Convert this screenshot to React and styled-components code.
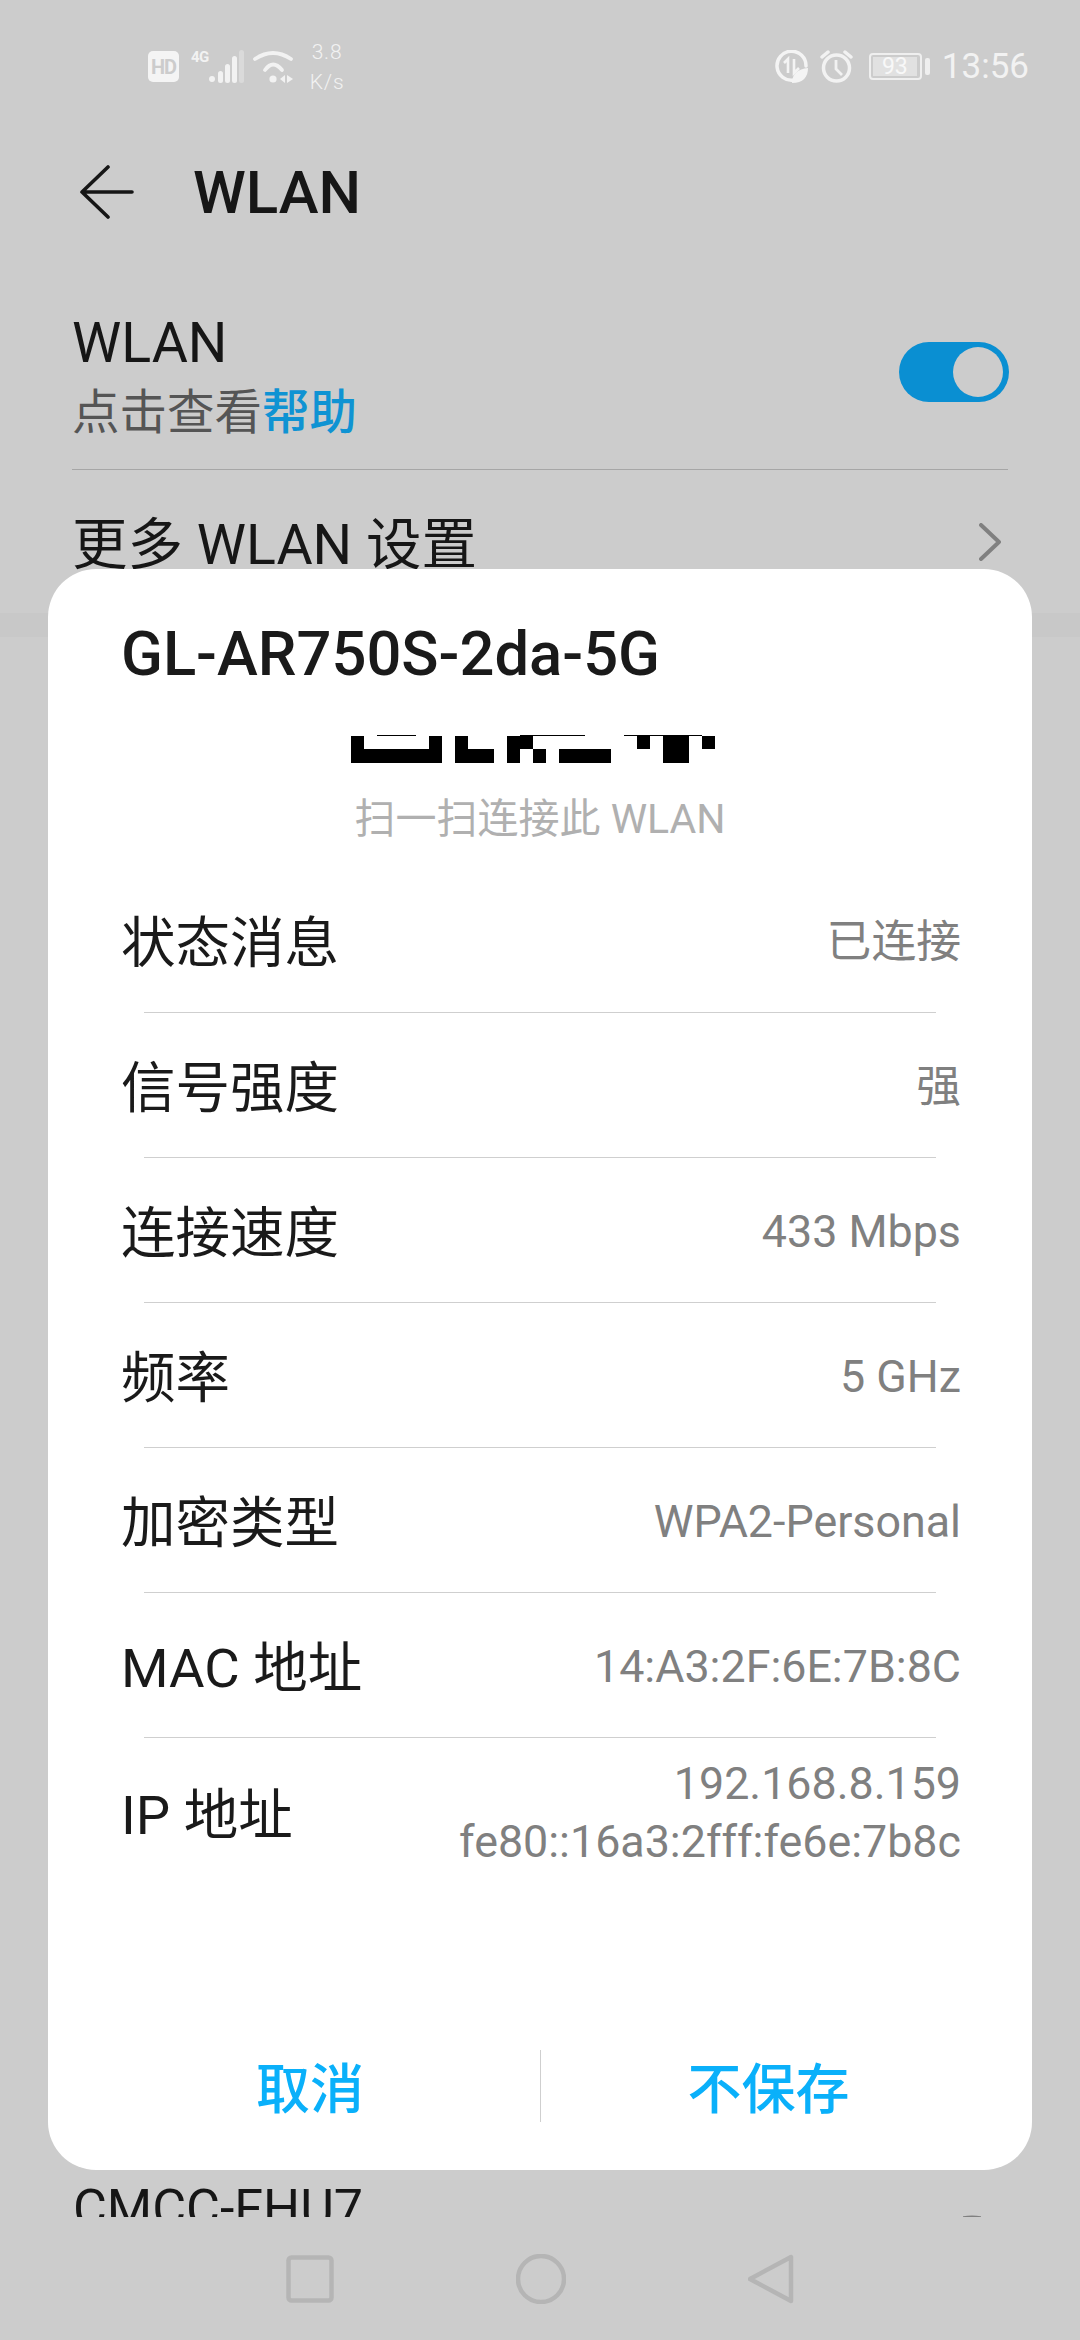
import React from 'react';
import styled, { createGlobalStyle } from 'styled-components';

const GlobalStyle = createGlobalStyle`
  html, body {
    margin: 0;
    padding: 0;
    background: #cccccc;
  }
  body {
    font-family: Roboto, "Noto Sans CJK SC", sans-serif;
  }
`;

const Page = styled.div`
  position: relative;
  width: 1080px;
  height: 2340px;
  overflow: hidden;
  background: #cccccc;
  color: #161616;
`;

const Content = styled.div`
  height: 2217px;
  overflow: hidden;
`;

const StatusBar = styled.div`
  height: 133px;
  display: flex;
  align-items: center;
  justify-content: space-between;
  padding: 0 51px 0 148px;
  box-sizing: border-box;
  color: #f2f2f2;
`;

const StatusGroup = styled.div`
  display: flex;
  align-items: center;
`;

const HdBadge = styled.div`
  width: 31px;
  height: 31px;
  border-radius: 5px;
  background: #f4f4f4;
  color: #cccccc;
  font-size: 20px;
  font-weight: 700;
  letter-spacing: -1px;
  display: flex;
  align-items: center;
  justify-content: center;
`;

const NetType = styled.div`
  width: 18px;
  margin: 0 0 20px 12px;
  font-size: 15px;
  line-height: 16px;
  font-weight: 700;
  letter-spacing: -0.5px;
  white-space: nowrap;
`;

const Speed = styled.div`
  margin-left: 14px;
  width: 36px;
  font-size: 21px;
  line-height: 30px;
  letter-spacing: 0.8px;
  text-align: center;
  font-weight: 300;
`;

const Battery = styled.div`
  width: 53px;
  height: 27px;
  margin-left: 16px;
  box-sizing: border-box;
  border: 2px solid #efefef;
  border-radius: 4px;
  padding: 2px;
`;

const BatteryLevel = styled.div`
  height: 100%;
  width: 44px;
  background: #e1e1e1;
  color: #f8f8f8;
  font-size: 23px;
  line-height: 20px;
  text-align: center;
`;

const BatteryNub = styled.div`
  width: 5px;
  height: 17px;
  margin-left: 3px;
  border-radius: 2px;
  background: #efefef;
`;

const Clock = styled.div`
  margin-left: 12px;
  font-size: 35px;
  line-height: 40px;
`;

const Header = styled.div`
  height: 117px;
  display: flex;
  align-items: center;
  padding-left: 80px;
`;

const PageTitle = styled.div`
  margin-left: 59px;
  padding-top: 3px;
  font-size: 60px;
  font-weight: 500;
  line-height: 70px;
`;

const WlanRow = styled.div`
  margin: 0 72px;
  padding: 59px 0 20px;
  display: flex;
  align-items: center;
  justify-content: space-between;
  border-bottom: 1px solid #a6a6a6;
`;

const RowTitle = styled.div`
  font-size: 55.5px;
  line-height: 69px;
  white-space: nowrap;
`;

const RowHint = styled.div`
  font-size: 47.5px;
  line-height: 71px;
  color: #555555;
`;

const HelpLink = styled.span`
  color: #0f93d3;
  font-weight: 500;
`;

const Toggle = styled.div`
  width: 110px;
  height: 60px;
  margin: 0 -1px 14px 0;
  box-sizing: border-box;
  padding: 5px 6px;
  border-radius: 30px;
  background: #0a8fd2;
  display: flex;
  justify-content: flex-end;
`;

const ToggleKnob = styled.div`
  width: 50px;
  height: 50px;
  border-radius: 50%;
  background: #cccccc;
`;

const MoreRow = styled.div`
  height: 143px;
  margin: 0 72px;
  padding-right: 7px;
  display: flex;
  align-items: center;
  justify-content: space-between;
`;

const MoreLabel = styled(RowTitle)`
  padding-top: 8px;
  font-size: 55.5px;
`;

const Band = styled.div`
  height: 24px;
  background: #c8c8c8;
`;

const ListGap = styled.div`
  height: 1537px;
`;

const NetworkRow = styled.div`
  margin: 0 72px 0 73px;
  height: 70px;
  display: flex;
  align-items: flex-end;
  justify-content: space-between;
  font-size: 52px;
  line-height: 70px;
`;

const NetworkIcon = styled.svg`
  margin: 0 27px 0 0;
  flex-shrink: 0;
  align-self: flex-start;
`;

const Modal = styled.div`
  position: absolute;
  top: 569px;
  left: 48px;
  width: 984px;
  height: 1601px;
  border-radius: 48px;
  background: #ffffff;
  display: flex;
  flex-direction: column;
  color: #1a1a1a;
`;

const ModalTitle = styled.div`
  margin: 50px 0 0 73px;
  font-size: 61.5px;
  font-weight: 500;
  line-height: 70px;
`;

const QrStrip = styled.svg`
  display: block;
  margin: 46px 0 0 303px;
`;

const QrCaption = styled.div`
  margin-top: 28px;
  font-size: 41px;
  line-height: 56px;
  text-align: center;
  color: #b0b0b0;
`;

const InfoList = styled.div`
  margin-top: 21px;
`;

const InfoRow = styled.div`
  min-height: 144px;
  box-sizing: border-box;
  padding: ${(p) => (p.$tall ? '17px' : '3px')} 71px ${(p) => (p.$tall ? '11px' : '0')} 73px;
  display: flex;
  align-items: center;
  justify-content: space-between;
`;

const InfoLabel = styled.div`
  padding-top: 3px;
  font-size: 54.5px;
  line-height: 70px;
`;

const InfoValue = styled.div`
  font-size: 44.8px;
  line-height: 58px;
  text-align: right;
  color: #808080;
`;

const InfoDivider = styled.div`
  height: 1px;
  margin: 0 96px;
  background: #cfcfcf;
`;

const ButtonBar = styled.div`
  margin-top: auto;
  padding: 0 36px 48px 32px;
  display: grid;
  grid-template-columns: 460px 1px 1fr;
  align-items: start;
`;

const ModalButton = styled.div`
  height: 72px;
  font-size: 54px;
  font-weight: 500;
  line-height: 82px;
  text-align: center;
  color: #0ab0fa;
`;

const ButtonDivider = styled.div`
  height: 72px;
  background: #cfcfcf;
`;

const NavBar = styled.div`
  height: 123px;
  display: flex;
  align-items: center;
  justify-content: center;
  gap: 182px;
  box-sizing: border-box;
`;

const SignalIcon = () => (
  <svg width="36" height="33" viewBox="0 0 36 33">
    <circle cx="3" cy="29" r="3" fill="#f2f2f2" />
    <rect x="9" y="21" width="5" height="12" rx="2.5" fill="#f2f2f2" />
    <rect x="16" y="14" width="5" height="19" rx="2.5" fill="#f2f2f2" />
    <rect x="23" y="6" width="5" height="27" rx="2.5" fill="#f2f2f2" />
    <rect x="30" y="0" width="5" height="33" rx="2.5" fill="#dadada" />
  </svg>
);

const WifiIcon = () => (
  <svg width="42" height="34" viewBox="0 0 42 34" style={{ marginLeft: 8 }}>
    <path d="M2 9 Q20 -3 38 9" fill="none" stroke="#f2f2f2" strokeWidth="3.8" strokeLinecap="round" />
    <path d="M12 20 Q20 9 29 20" fill="none" stroke="#f2f2f2" strokeWidth="3.8" strokeLinecap="round" />
    <circle cx="20" cy="29" r="3.6" fill="#f2f2f2" />
    <path d="M32 25 V33 L27 29 Z" fill="#f2f2f2" />
    <path d="M34 25 V33 L40 29 Z" fill="#f2f2f2" />
  </svg>
);

const EcoIcon = () => (
  <svg width="33" height="33" viewBox="0 0 33 33">
    <path d="M19 30 A14.5 14.5 0 1 1 31 16" fill="none" stroke="#f4f4f4" strokeWidth="3.5" strokeLinecap="round" />
    <path d="M9 13 L13 9 V23 M19 9 V23 L24 18" fill="none" stroke="#f4f4f4" strokeWidth="2.6" />
    <path d="M17 33 C17 24 23 19 33 18 C33 27 28 33 17 33 Z" fill="#f4f4f4" />
  </svg>
);

const AlarmIcon = () => (
  <svg width="33" height="33" viewBox="0 0 33 33" style={{ marginLeft: 12 }}>
    <circle cx="16.5" cy="18" r="13" fill="none" stroke="#f2f2f2" strokeWidth="3.5" />
    <path d="M16 10 V19 L22 25" fill="none" stroke="#f2f2f2" strokeWidth="2.8" />
    <path d="M2 7 L8 2 M31 7 L25 2" fill="none" stroke="#f2f2f2" strokeWidth="3.5" strokeLinecap="round" />
  </svg>
);

const BackArrow = () => (
  <svg width="54" height="54" viewBox="0 0 54 54">
    <path d="M28 2 L2 27 L28 52 M2 27 H52" fill="none" stroke="#161616" strokeWidth="3.6" strokeLinecap="round" strokeLinejoin="round" />
  </svg>
);

const Chevron = () => (
  <svg width="22" height="38" viewBox="0 0 22 38">
    <path d="M2 2 L20 19 L2 36" fill="none" stroke="#808080" strokeWidth="4" strokeLinecap="round" strokeLinejoin="round" />
  </svg>
);

const qrCells = [
  // thin edge of the row above
  [26, 0, 39, 1],
  [169, 0, 65, 1],
  [273, 0, 78, 1],
  // first row
  [0, 1, 13, 13],
  [78, 1, 13, 13],
  [104, 1, 13, 13],
  [156, 1, 26, 13],
  [286, 1, 13, 13],
  [312, 1, 26, 13],
  [351, 1, 13, 13],
  // second row
  [0, 14, 91, 14],
  [104, 14, 39, 14],
  [156, 14, 13, 14],
  [182, 14, 13, 14],
  [208, 14, 52, 14],
  [312, 14, 26, 14],
];

const infoRows = [
  ['状态消息', '已连接'],
  ['信号强度', '强'],
  ['连接速度', '433 Mbps'],
  ['频率', '5 GHz'],
  ['加密类型', 'WPA2-Personal'],
  ['MAC 地址', '14:A3:2F:6E:7B:8C'],
];

function App() {
  return (
    <Page>
      <GlobalStyle />
      <Content>
        <StatusBar>
          <StatusGroup>
            <HdBadge>HD</HdBadge>
            <NetType>4G</NetType>
            <SignalIcon />
            <WifiIcon />
            <Speed>
              3.8
              <br />
              K/s
            </Speed>
          </StatusGroup>
          <StatusGroup>
            <EcoIcon />
            <AlarmIcon />
            <Battery>
              <BatteryLevel>93</BatteryLevel>
            </Battery>
            <BatteryNub />
            <Clock>13:56</Clock>
          </StatusGroup>
        </StatusBar>
        <Header>
          <BackArrow />
          <PageTitle>WLAN</PageTitle>
        </Header>
        <WlanRow>
          <div>
            <RowTitle>WLAN</RowTitle>
            <RowHint>
              点击查看<HelpLink>帮助</HelpLink>
            </RowHint>
          </div>
          <Toggle>
            <ToggleKnob />
          </Toggle>
        </WlanRow>
        <MoreRow>
          <MoreLabel>更多 WLAN 设置</MoreLabel>
          <Chevron />
        </MoreRow>
        <Band />
        <ListGap />
        <NetworkRow>
          <span>CMCC-FHU7</span>
          <NetworkIcon width="18" height="50" viewBox="0 0 18 50">
            <path d="M0 43 Q9 41.5 18 43" fill="none" stroke="#808080" strokeWidth="1.5" />
          </NetworkIcon>
        </NetworkRow>
      </Content>
      <NavBar>
        <svg width="48" height="48" viewBox="0 0 48 48">
          <rect x="2.5" y="2.5" width="43" height="43" rx="3" fill="none" stroke="#b5b5b5" strokeWidth="4.5" />
        </svg>
        <svg width="50" height="50" viewBox="0 0 50 50">
          <circle cx="25" cy="25" r="23" fill="none" stroke="#b5b5b5" strokeWidth="4.5" />
        </svg>
        <svg width="46" height="50" viewBox="0 0 46 50">
          <path d="M43 3 V47 L2 25 Z" fill="none" stroke="#b5b5b5" strokeWidth="4.5" strokeLinejoin="round" />
        </svg>
      </NavBar>
      <Modal>
        <ModalTitle>GL-AR750S-2da-5G</ModalTitle>
        <QrStrip width="364" height="28" viewBox="0 0 364 28">
          {qrCells.map(([x, y, w, h]) => (
            <rect key={`${x}-${y}`} x={x} y={y} width={w} height={h} fill="#000000" />
          ))}
        </QrStrip>
        <QrCaption>扫一扫连接此 WLAN</QrCaption>
        <InfoList>
          {infoRows.map(([label, value]) => (
            <React.Fragment key={label}>
              <InfoRow>
                <InfoLabel>{label}</InfoLabel>
                <InfoValue>{value}</InfoValue>
              </InfoRow>
              <InfoDivider />
            </React.Fragment>
          ))}
          <InfoRow $tall>
            <InfoLabel>IP 地址</InfoLabel>
            <InfoValue>
              192.168.8.159
              <br />
              fe80::16a3:2fff:fe6e:7b8c
            </InfoValue>
          </InfoRow>
        </InfoList>
        <ButtonBar>
          <ModalButton>取消</ModalButton>
          <ButtonDivider />
          <ModalButton>不保存</ModalButton>
        </ButtonBar>
      </Modal>
    </Page>
  );
}

export default App;
